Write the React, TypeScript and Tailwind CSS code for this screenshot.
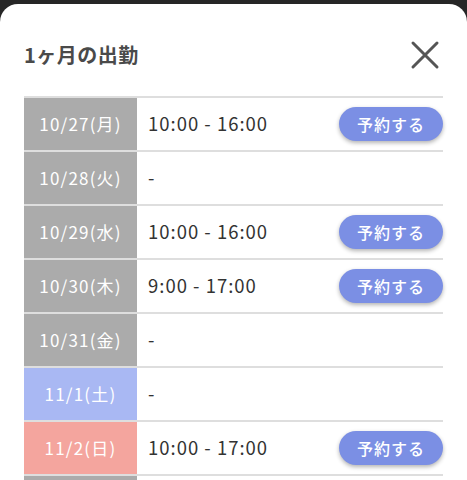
import React from "react";

type Shift = {
  date: string;
  time: string;
  kind: "weekday" | "sat" | "sun";
  bookable: boolean;
};

const shifts: Shift[] = [
  { date: "10/27(月)", time: "10:00 - 16:00", kind: "weekday", bookable: true },
  { date: "10/28(火)", time: "-", kind: "weekday", bookable: false },
  { date: "10/29(水)", time: "10:00 - 16:00", kind: "weekday", bookable: true },
  { date: "10/30(木)", time: "9:00 - 17:00", kind: "weekday", bookable: true },
  { date: "10/31(金)", time: "-", kind: "weekday", bookable: false },
  { date: "11/1(土)", time: "-", kind: "sat", bookable: false },
  { date: "11/2(日)", time: "10:00 - 17:00", kind: "sun", bookable: true },
  { date: "11/3(月)", time: "10:00 - 16:00", kind: "weekday", bookable: true },
];

const dateBg = {
  weekday: "bg-[#ababab]",
  sat: "bg-[#a9b8f3]",
  sun: "bg-[#f4a59e]",
};

function Row({ s }: { s: Shift }) {
  return (
    <div className="flex h-[54px] border-b-2 border-[#dedede]">
      <div
        className={`flex w-[113px] flex-shrink-0 items-center justify-center text-[17px] tracking-[1.2px] text-white ${dateBg[s.kind]}`}
      >
        {s.date}
      </div>
      <div className="flex flex-1 items-center justify-between pl-[11px]">
        <span className="text-[18.5px] tracking-[1px] text-[#333]">{s.time}</span>
        {s.bookable && (
          <button className="h-[34px] w-[104px] rounded-full bg-[#7b8fe4] text-[16px] font-medium tracking-[1px] text-white shadow-[0_2px_4px_rgba(0,0,0,0.3)]">
            予約する
          </button>
        )}
      </div>
    </div>
  );
}

export default function App() {
  return (
    <div
      className="h-[480px] overflow-hidden bg-[#262626] pt-[4px]"
      style={{ fontFamily: '"Noto Sans CJK JP", "Noto Sans", sans-serif' }}
    >
      <div className="h-full rounded-t-[18px] bg-white px-6 pt-[22px]">
        <div className="mb-[12px] flex h-[58px] items-center justify-between">
          <h2 className="text-[20px] font-bold tracking-[0.5px] text-[#4a4a4a]">1ヶ月の出勤</h2>
          <svg width="30" height="30" viewBox="0 0 30 30" className="mr-[3px]">
            <path
              d="M3 3 L27 27 M27 3 L3 27"
              stroke="#555"
              strokeWidth="3"
              strokeLinecap="round"
            />
          </svg>
        </div>

        <div className="border-t-2 border-[#dedede]">
          {shifts.map((s) => (
            <Row key={s.date} s={s} />
          ))}
        </div>
      </div>
    </div>
  );
}
